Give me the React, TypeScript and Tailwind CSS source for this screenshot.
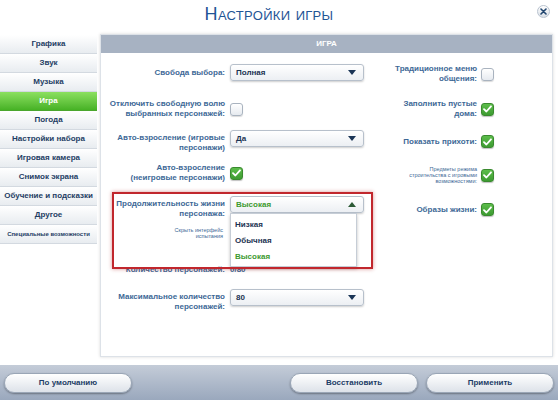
import React from "react";

const sideItems = [
  "Графика",
  "Звук",
  "Музыка",
  "Игра",
  "Погода",
  "Настройки набора",
  "Игровая камера",
  "Снимок экрана",
  "Обучение и подсказки",
  "Другое",
  "Специальные возможности",
];

function Arrow({ up = false, color = "#1b3556" }: { up?: boolean; color?: string }) {
  return (
    <svg width="8" height="5" viewBox="0 0 8 5" className="shrink-0">
      <path d={up ? "M0 5 L4 0 L8 5 Z" : "M0 0 L8 0 L4 5 Z"} fill={color} />
    </svg>
  );
}

function Dropdown({ value, green = false, up = false }: { value: string; green?: boolean; up?: boolean }) {
  return (
    <div className="flex h-[17px] w-[134px] items-center justify-between rounded-[3px] border border-[#b7c0cb] bg-gradient-to-b from-white to-[#eceff3] pl-[5px] pr-[7px] shadow-[0_1px_2px_rgba(0,0,0,0.2)]">
      <span className={"text-[8px] font-bold " + (green ? "text-[#3c9a2f]" : "text-[#1c3352]")}>{value}</span>
      <Arrow up={up} color={up ? "#2c5a36" : "#1b3556"} />
    </div>
  );
}

function Check({ on }: { on: boolean }) {
  if (on) {
    return (
      <div className="flex h-[13px] w-[13px] shrink-0 items-center justify-center rounded-[3px] border border-[#3a8a2f] bg-gradient-to-b from-[#5cbd4a] to-[#3d9b31] shadow-[0_1px_1px_rgba(0,0,0,0.25)]">
        <svg width="9" height="8" viewBox="0 0 9 8">
          <path d="M1 4.2 L3.4 6.5 L8 1.3" stroke="white" strokeWidth="1.8" fill="none" strokeLinecap="round" strokeLinejoin="round" />
        </svg>
      </div>
    );
  }
  return (
    <div className="h-[13px] w-[13px] shrink-0 rounded-[3px] border border-[#a9b3bf] bg-gradient-to-b from-white to-[#e6eaef] shadow-[0_1px_1px_rgba(0,0,0,0.15)]" />
  );
}

function Label({ children, className = "" }: { children: React.ReactNode; className?: string }) {
  return (
    <div className={"w-[124px] shrink-0 text-right text-[8px] font-bold leading-[10px] text-[#3d6896] " + className}>
      {children}
    </div>
  );
}

function RLabel({ children, tiny = false }: { children: React.ReactNode; tiny?: boolean }) {
  return (
    <div
      className={
        "w-[100px] shrink-0 text-right text-[#3d6896] " +
        (tiny ? "text-[5.5px] leading-[6px]" : "text-[8px] font-bold leading-[10px]")
      }
    >
      {children}
    </div>
  );
}

function FooterButton({ children }: { children: React.ReactNode }) {
  return (
    <button className="flex h-[20px] w-[128px] items-center justify-center rounded-[10px] border border-[#9aa6b6] bg-gradient-to-b from-white to-[#dde2e9] text-[8px] font-bold text-[#1d3d66] shadow-[0_1px_2px_rgba(0,0,0,0.35)]">
      {children}
    </button>
  );
}

export default function App() {
  return (
    <div
      className="flex h-[400px] w-[558px] flex-col overflow-hidden bg-white"
      style={{ fontFamily: '"Liberation Sans", Arial, sans-serif' }}
    >
      {/* header */}
      <div className="relative flex h-[34px] shrink-0 items-start justify-center">
        <h1 className="ml-[-20px] mt-[3px] text-[18px] leading-[22px] tracking-[0.3px] text-[#1f5596] [font-variant:small-caps]">
          Настройки игры
        </h1>
        <div className="absolute right-[8px] top-[5px] flex h-[13px] w-[13px] items-center justify-center rounded-full border border-[#b9c3cf] bg-gradient-to-b from-white to-[#d9dfe6]">
          <svg width="7" height="7" viewBox="0 0 7 7">
            <path d="M1 1 L6 6 M6 1 L1 6" stroke="#22466f" strokeWidth="1.6" strokeLinecap="round" />
          </svg>
        </div>
      </div>

      {/* middle */}
      <div className="flex h-[331px] shrink-0">
        <div className="mt-[1px] flex w-[97px] shrink-0 flex-col self-start">
          {sideItems.map((item) => {
            const active = item === "Игра";
            return (
              <div
                key={item}
                className={
                  "flex h-[19px] items-center justify-center whitespace-nowrap border-b text-center font-bold " +
                  (active
                    ? "border-[#4aa62d] bg-gradient-to-b from-[#8be05f] to-[#46b224] text-white"
                    : "border-[#d3d9e0] bg-gradient-to-b from-white to-[#e8ecf0] text-[#1e3d64]") +
                  (item === "Специальные возможности" ? " text-[6px]" : " text-[8px]")
                }
              >
                {item}
              </div>
            );
          })}
        </div>

        <div className="relative ml-[3px] h-[323px] w-[453px] border border-[#dde2e8] bg-white shadow-[0_0_3px_rgba(0,0,0,0.15)]">
          <div className="flex h-[18px] items-center justify-center bg-[#a7b2c2] text-[8px] font-bold text-white">
            ИГРА
          </div>

          <div className="flex">
            {/* left column */}
            <div className="flex w-[272px] flex-col">
              <div className="mt-[11px] flex h-[17px] items-center gap-[5px]">
                <Label>Свобода выбора:</Label>
                <Dropdown value="Полная" />
              </div>
              <div className="mt-[18px] flex h-[20px] items-center gap-[5px]">
                <Label>
                  Отключить свободную волю
                  <br />
                  выбранных персонажей:
                </Label>
                <Check on={false} />
              </div>
              <div className="mt-[11px] flex h-[23px] items-start gap-[5px]">
                <Label className="mt-[3px]">
                  Авто-взросление (игровые
                  <br />
                  персонажи)
                </Label>
                <Dropdown value="Да" />
              </div>
              <div className="mt-[10px] flex h-[20px] items-center gap-[5px]">
                <Label>
                  Авто-взросление
                  <br />
                  (неигровые персонажи)
                </Label>
                <Check on={true} />
              </div>
              <div className="mt-[13px] flex h-[69px] items-start gap-[5px]">
                <div className="mt-[3px] flex w-[124px] shrink-0 flex-col items-end">
                  <Label>
                    Продолжительность жизни
                    <br />
                    персонажа:
                  </Label>
                  <div className="mr-[2px] mt-[8px] text-right text-[5.5px] leading-[6px] text-[#3d6896]">
                    Скрыть интерфейс
                    <br />
                    испытания
                  </div>
                </div>
                <div className="relative">
                  <Dropdown value="Высокая" green up />
                  <div className="absolute left-0 top-[17px] z-10 flex h-[54px] w-[127px] flex-col border border-[#c6cdd6] bg-white pl-[4px] pt-[3px] shadow-[0_2px_3px_rgba(0,0,0,0.25)]">
                    <div className="flex h-[16px] items-center text-[8px] font-bold text-[#1c3352]">Низкая</div>
                    <div className="flex h-[16px] items-center text-[8px] font-bold text-[#1c3352]">Обычная</div>
                    <div className="flex h-[16px] items-center text-[8px] font-bold text-[#3c9a2f]">Высокая</div>
                  </div>
                </div>
              </div>
              <div className="flex h-[10px] items-center gap-[5px]">
                <Label>Количество персонажей:</Label>
                <span className="text-[8px] font-bold text-[#3d6896]">0/80</span>
              </div>
              <div className="mt-[14px] flex h-[23px] items-start gap-[5px]">
                <Label className="mt-[3px]">
                  Максимальное количество
                  <br />
                  персонажей:
                </Label>
                <Dropdown value="80" />
              </div>
            </div>

            {/* right column */}
            <div className="flex flex-col pl-[4px]">
              <div className="mt-[11px] flex h-[20px] items-center gap-[4px]">
                <RLabel>
                  Традиционное меню
                  <br />
                  общения:
                </RLabel>
                <Check on={false} />
              </div>
              <div className="mt-[15px] flex h-[20px] items-center gap-[4px]">
                <RLabel>
                  Заполнить пустые
                  <br />
                  дома:
                </RLabel>
                <Check on={true} />
              </div>
              <div className="mt-[16px] flex h-[13px] items-center gap-[4px]">
                <RLabel>Показать прихоти:</RLabel>
                <Check on={true} />
              </div>
              <div className="mt-[18px] flex h-[18px] items-center gap-[4px]">
                <RLabel tiny>
                  Предметы режима
                  <br />
                  строительства с игровыми
                  <br />
                  возможностями:
                </RLabel>
                <Check on={true} />
              </div>
              <div className="mt-[19px] flex h-[13px] items-center gap-[4px]">
                <RLabel>Образы жизни:</RLabel>
                <Check on={true} />
              </div>
            </div>
          </div>

          {/* annotation box */}
          <div className="pointer-events-none absolute left-[11px] top-[157px] z-20 h-[77px] w-[261px] border-2 border-[#c1272d] shadow-[0_0_4px_rgba(170,20,20,0.45)]" />
        </div>
      </div>

      {/* footer */}
      <div className="flex h-[35px] shrink-0 items-center bg-gradient-to-b from-[#c4ccd8] to-[#9aa8bd] px-[4px] pt-[1px]">
        <FooterButton>По умолчанию</FooterButton>
        <div className="flex-1" />
        <div className="flex gap-[8px]">
          <FooterButton>Восстановить</FooterButton>
          <FooterButton>Применить</FooterButton>
        </div>
      </div>
    </div>
  );
}
